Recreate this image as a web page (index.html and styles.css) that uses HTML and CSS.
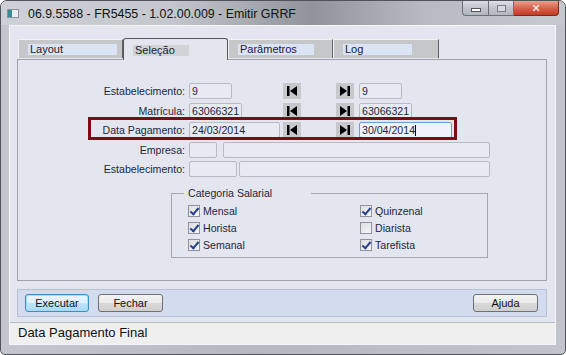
FILE: index.html
```html
<!DOCTYPE html>
<html lang="pt-BR">
<head>
    <meta charset="UTF-8">
    <title>Emitir GRRF</title>
    <link rel="stylesheet" href="styles.css">
</head>
<body>

<div class="window">
    <div class="titlebar">
        <span class="app-icon"></span>
        <span class="title">06.9.5588 - FR5455 - 1.02.00.009 - Emitir GRRF</span>
        <div class="caption-btns">
            <span class="cap cap-min"><i></i></span>
            <span class="cap cap-max"><i></i></span>
            <span class="cap cap-close">&#x2715;</span>
        </div>
    </div>

    <div class="client">
        <div class="content">
            <div class="tabs">
                <div class="tab"><span class="tab-label w-layout">Layout</span></div>
                <div class="tab active"><span class="tab-label w-selecao">Seleção</span></div>
                <div class="tab"><span class="tab-label w-param">Parâmetros</span></div>
                <div class="tab last"><span class="tab-label w-log">Log</span></div>
            </div>

            <div class="tab-panel">
                <div class="form-row">
                    <label class="lbl">Estabelecimento:</label>
                    <div class="cell"><span class="field" style="width: 43px">9</span></div>
                    <span class="nav"><svg width="18" height="16" viewBox="0 0 18 16"><rect x="4" y="3" width="2.5" height="10"/><polygon points="14,3 7,8 14,13"/></svg></span>
                    <span class="nav nav-last"><svg width="18" height="16" viewBox="0 0 18 16"><polygon points="4,3 11,8 4,13"/><rect x="11.5" y="3" width="2.5" height="10"/></svg></span>
                    <span class="field" style="width: 43px">9</span>
                </div>
                <div class="form-row">
                    <label class="lbl">Matrícula:</label>
                    <div class="cell"><span class="field" style="width: 53px">63066321</span></div>
                    <span class="nav"><svg width="18" height="16" viewBox="0 0 18 16"><rect x="4" y="3" width="2.5" height="10"/><polygon points="14,3 7,8 14,13"/></svg></span>
                    <span class="nav nav-last"><svg width="18" height="16" viewBox="0 0 18 16"><polygon points="4,3 11,8 4,13"/><rect x="11.5" y="3" width="2.5" height="10"/></svg></span>
                    <span class="field" style="width: 53px">63066321</span>
                </div>
                <div class="form-row">
                    <label class="lbl">Data Pagamento:</label>
                    <div class="cell"><span class="field" style="width: 91px">24/03/2014</span></div>
                    <span class="nav"><svg width="18" height="16" viewBox="0 0 18 16"><rect x="4" y="3" width="2.5" height="10"/><polygon points="14,3 7,8 14,13"/></svg></span>
                    <span class="nav nav-last"><svg width="18" height="16" viewBox="0 0 18 16"><polygon points="4,3 11,8 4,13"/><rect x="11.5" y="3" width="2.5" height="10"/></svg></span>
                    <span class="field focused" style="width: 93px">30/04/2014<span class="caret"></span></span>
                </div>
                <div class="form-row">
                    <label class="lbl">Empresa:</label>
                    <span class="field" style="width: 28px"></span>
                    <span class="field gap6" style="width: 267px"></span>
                </div>
                <div class="form-row">
                    <label class="lbl">Estabelecimento:</label>
                    <span class="field" style="width: 48px"></span>
                    <span class="field gap2" style="width: 251px"></span>
                </div>

                <fieldset class="group">
                    <legend>Categoria Salarial</legend>
                    <div class="checks">
                        <label class="chk"><span class="box on"></span>Mensal</label>
                        <label class="chk"><span class="box on"></span>Quinzenal</label>
                        <label class="chk"><span class="box on"></span>Horista</label>
                        <label class="chk"><span class="box"></span>Diarista</label>
                        <label class="chk"><span class="box on"></span>Semanal</label>
                        <label class="chk"><span class="box on"></span>Tarefista</label>
                    </div>
                </fieldset>

                <!-- annotation drawn on top of the screenshot -->
                <div class="highlight"></div>
            </div>

            <div class="button-bar">
                <button class="btn btn-default">Executar</button>
                <button class="btn">Fechar</button>
                <button class="btn btn-right">Ajuda</button>
            </div>
        </div>
        <div class="statusbar">Data Pagamento Final</div>
    </div>
</div>

</body>
</html>
```

FILE: styles.css
```css
body {
    margin: 0;
    background-color: #ffffff;
    font-family: "Liberation Sans", Arial, sans-serif;
}
.window {
    width: 566px;
    height: 355px;
    box-sizing: border-box;
    border: 1px solid #4f545b;
    border-radius: 7px 7px 5px 5px;
    background: linear-gradient(to right, #c3c7cd, #b4b9c0 45%, #c1c5cb);
    display: flex;
    flex-direction: column;
    overflow: hidden;
}
.titlebar {
    height: 24px;
    display: flex;
    align-items: center;
    background: linear-gradient(to right, #cdd1d6 0%, #c4c8ce 30%, #8f949b 55%, #b7bbc1 75%, #c6cacf 100%);
    flex-shrink: 0;
}
.app-icon {
    width: 10px;
    height: 7px;
    margin-left: 6px;
    margin-top: 1px;
    background: linear-gradient(to right, #3a8a9a 0, #3a8a9a 4px, #e8eef2 4px);
    border: 1px solid #8b9198;
}
.title {
    margin-left: 9px;
    font-size: 12.4px;
    color: #111;
    margin-top: 1px;
}
.caption-btns {
    margin-left: auto;
    margin-right: 6px;
    align-self: flex-start;
    display: flex;
    height: 15px;
}
.cap {
    height: 15px;
    box-sizing: border-box;
    border: 1px solid #6a7078;
    border-top: none;
    background: linear-gradient(#dde0e4, #c0c4ca 50%, #b2b7be);
    display: flex;
    align-items: center;
    justify-content: center;
}
.cap-min {
    width: 27px;
    border-radius: 0 0 0 4px;
}
.cap-min i {
    width: 8px;
    height: 2px;
    margin-top: 4px;
    background: #fff;
    border: 1px solid #555;
}
.cap-max {
    width: 25px;
    border-left: none;
}
.cap-max i {
    width: 7px;
    height: 5px;
    border: 1px solid #7a7f86;
    background: #d6d9dd;
}
.cap-close {
    width: 45px;
    border-left: none;
    border-color: #7a2a20;
    border-radius: 0 0 4px 0;
    background: linear-gradient(#eaa08f, #d9634c 50%, #c23a22);
    color: #fff;
    font-size: 11px;
    font-weight: bold;
    font-family: "DejaVu Sans", sans-serif;
}
.client {
    margin: 0 9px 9px 8px;
    border: 1px solid #f5f6f8;
    background-color: #e3e6ee;
    flex: 1;
    display: flex;
    flex-direction: column;
}
.content {
    flex: 1;
    padding: 12px 8px 0 7px;
}
.tabs {
    display: flex;
    height: 21px;
    margin-left: 1px;
    align-items: flex-end;
}
.tab {
    width: 105px;
    height: 19px;
    box-sizing: border-box;
    background-color: #c6c7c9;
    border-top: 1px solid #f2f2f2;
    border-left: 1px solid #f2f2f2;
    border-right: 1px solid #5f6165;
    padding: 4px 0 0 9px;
    margin-bottom: 1px;
}
.tab.last {
    width: 106px;
}
.tab.active {
    height: 22px;
    margin-bottom: -1px;
    background-color: #e3e6ee;
    border: 1px solid #55585d;
    border-bottom: none;
    border-radius: 3px 3px 0 0;
    padding-top: 6px;
    position: relative;
    z-index: 1;
}
.tab-label {
    display: block;
    height: 11px;
    background-color: #dae4f4;
    font-size: 11px;
    line-height: 11px;
    padding-left: 2px;
    color: #1b2030;
}
.tab.active .tab-label {
    background-color: #d2d3d6;
}
.w-layout { width: 87px; }
.w-selecao { width: 54px; }
.w-param { width: 74px; }
.w-log { width: 67px; }
.tab-panel {
    position: relative;
    height: 222px;
    box-sizing: border-box;
    border: 1px solid #9fa4ac;
    padding-top: 23px;
}
.form-row {
    display: flex;
    align-items: center;
    height: 16px;
    margin-bottom: 3.5px;
    font-size: 10.6px;
    color: #1c2740;
}
.lbl {
    width: 167px;
    text-align: right;
    margin-right: 4px;
    flex-shrink: 0;
}
.cell {
    width: 94px;
    flex-shrink: 0;
}
.field {
    display: block;
    height: 16px;
    box-sizing: border-box;
    border: 1px solid #b6bbc4;
    border-radius: 2px;
    background-color: #e7eaf1;
    padding-left: 2px;
    line-height: 14px;
    white-space: nowrap;
    flex-shrink: 0;
}
.field.focused {
    border-color: #6e9ad2;
    background-color: #eef2f9;
}
.caret {
    display: inline-block;
    width: 1px;
    height: 11px;
    background: #000;
    vertical-align: -2px;
}
.gap6 { margin-left: 6px; }
.gap2 { margin-left: 2px; }
.nav {
    width: 18px;
    height: 16px;
    background-color: #c6c8cc;
    flex-shrink: 0;
}
.nav svg {
    display: block;
    fill: #000;
}
.nav-last {
    margin-left: 35px;
    margin-right: 5px;
}
.group {
    margin: 10px 0 0 153px;
    width: 317px;
    box-sizing: border-box;
    border: 1px solid #a3a8b0;
    padding: 0 0 4px 12px;
    font-size: 10.6px;
    color: #1c2740;
}
.group legend {
    width: 127px;
    box-sizing: border-box;
    padding: 0 0 0 4px;
    line-height: 13px;
}
.checks {
    display: grid;
    grid-template-columns: 172px auto;
    grid-auto-rows: 17px;
    margin: 2px 0 0 4px;
}
.chk {
    display: flex;
    align-items: center;
}
.box {
    width: 12px;
    height: 12px;
    box-sizing: border-box;
    border: 1px solid #8e9299;
    background: linear-gradient(135deg, #dcdde0, #f6f6f7);
    margin-right: 3px;
    position: relative;
}
.box.on::after {
    content: "";
    position: absolute;
    left: 3px;
    top: 0;
    width: 3px;
    height: 7px;
    border-right: 2px solid #27408b;
    border-bottom: 2px solid #27408b;
    transform: rotate(40deg);
}
.highlight {
    position: absolute;
    left: 70px;
    top: 57px;
    width: 369px;
    height: 23px;
    box-sizing: border-box;
    border: 3px solid #7d0b16;
}
.button-bar {
    margin-top: 8px;
    height: 28px;
    box-sizing: border-box;
    border: 1px solid #b8c1d3;
    background-color: #d3dcee;
    display: flex;
    align-items: center;
    padding: 0 8px 0 7px;
    gap: 9px;
}
.btn {
    width: 65px;
    height: 18px;
    padding: 0;
    font-family: "Liberation Sans", Arial, sans-serif;
    font-size: 11px;
    color: #111;
    border: 1px solid #707070;
    border-radius: 3px;
    background: linear-gradient(#f3f3f3, #e9e9e9 50%, #d9d9d9 51%, #cfcfcf);
}
.btn-default {
    width: 64px;
    border-color: #3c8fc4;
    background: linear-gradient(#eaf6fd, #d9f0fc 50%, #bee6fd 51%, #a7d9f5);
    box-shadow: inset 0 0 0 1px #a6dcf5;
}
.btn-right {
    margin-left: auto;
}
.statusbar {
    height: 22px;
    box-sizing: border-box;
    border-top: 1px solid #babdc3;
    background-color: #f0efef;
    font-size: 13px;
    line-height: 20px;
    padding-left: 8px;
    color: #111;
}
```
